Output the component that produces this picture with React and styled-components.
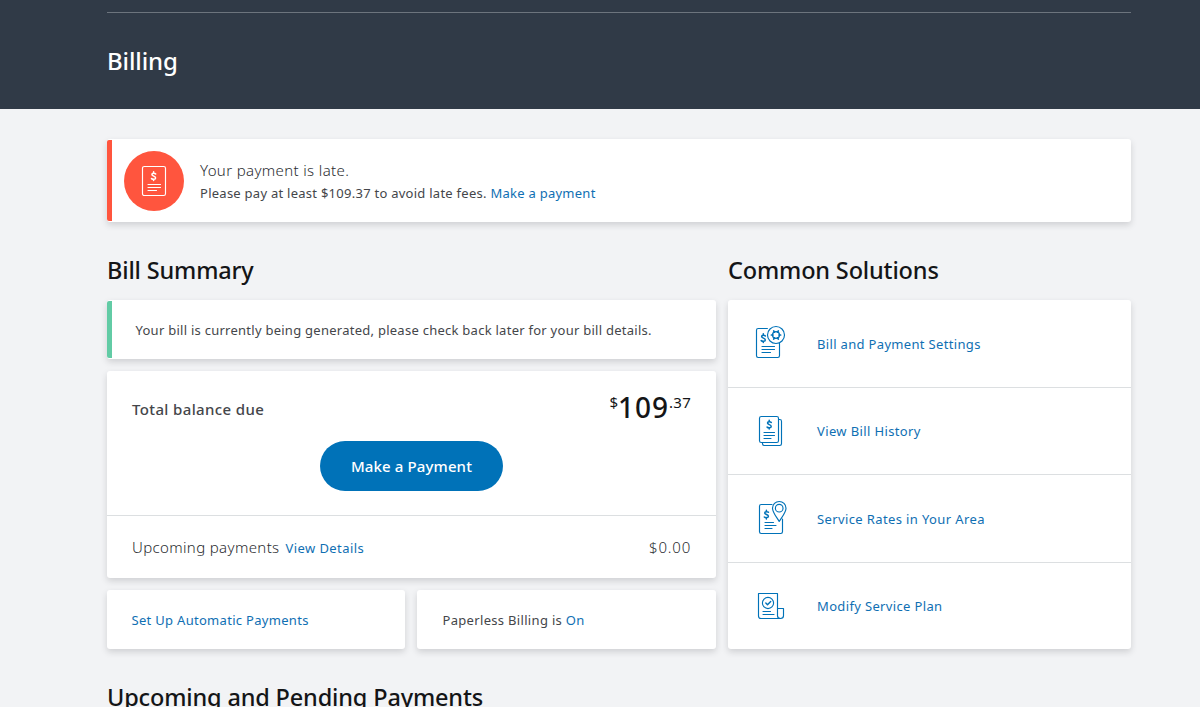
import React from "react";
import styled, { createGlobalStyle } from "styled-components";

const Global = createGlobalStyle`
  * { box-sizing: border-box; }
  body {
    margin: 0;
    height: 707px;
    overflow: hidden;
    background: #f2f3f5;
    color: #44464a;
    font-family: "Noto Sans", "Open Sans", sans-serif;
    font-size: 13px;
  }
`;

const Header = styled.header`
  height: 109px;
  padding: 12px 69px 0 107px;
  background: #303a47;
`;
const HeaderInner = styled.div`
  border-top: 1px solid #6c747d;
  padding-top: 31px;
`;
const PageTitle = styled.h1`
  margin: 0;
  color: #fff;
  font-size: 24px;
  line-height: 34px;
  font-weight: 500;
  letter-spacing: -0.1px;
`;
const Main = styled.main`
  padding: 30px 69px 0 107px;
`;
const Card = styled.section`
  background: #fff;
  border-radius: 3px;
  box-shadow: 0 3px 6px rgba(40, 44, 50, 0.17);
`;
const Notice = styled(Card)`
  display: flex;
  align-items: center;
  height: ${(p) => p.$height}px;
  position: relative;
  padding-left: ${(p) => p.$inset}px;
  &::before {
    content: "";
    position: absolute;
    left: 0;
    top: 1px;
    bottom: 1px;
    width: 5px;
    border-radius: 2px 0 0 2px;
    background: ${(p) => p.$accent};
  }
`;
const Badge = styled.div`
  display: flex;
  align-items: center;
  justify-content: center;
  width: 60px;
  height: 60px;
  margin-right: 16px;
  border-radius: 50%;
  background: #ff553e;
  color: #fff;
`;
const NoticeText = styled.div`
  display: flex;
  flex-direction: column;
  padding-top: 2px;
`;
const Text = styled.span`
  font-size: ${(p) => p.$size || 13}px;
  line-height: ${(p) => p.$line || 22}px;
  font-weight: ${(p) => p.$weight || 400};
  letter-spacing: ${(p) => (p.$track === undefined ? 0.26 : p.$track)}px;
  white-space: nowrap;
`;
const LightText = styled(Text)`
  color: #2a2c30;
  font-size: 15px;
  line-height: 23px;
  font-weight: 300;
`;
const Link = styled.a`
  color: #0f6fb3;
  text-decoration: none;
  font-size: 13px;
  line-height: 22px;
  letter-spacing: ${(p) => (p.$track === undefined ? 0.26 : p.$track)}px;
  white-space: nowrap;
`;
const Columns = styled.div`
  display: grid;
  grid-template-columns: 609px 403px;
  column-gap: 12px;
`;
const Heading = styled.h2`
  margin: 0;
  padding-top: 31px;
  height: 78px;
  color: #141517;
  font-size: 23.5px;
  line-height: 34px;
  font-weight: 500;
  letter-spacing: -0.16px;
  white-space: nowrap;
`;
const Stack = styled.div`
  display: flex;
  flex-direction: column;
  gap: 12px;
`;
const BalanceTop = styled.div`
  height: 145px;
  padding: 20px 25px 0;
  border-bottom: 1px solid #dcdfe1;
`;
const Line = styled.div`
  display: flex;
  justify-content: space-between;
`;
const Amount = styled.div`
  display: flex;
  align-items: flex-start;
  height: 50px;
  color: #141517;
`;
const Dollars = styled.span`
  font-size: 28px;
  line-height: 33px;
  font-weight: 500;
  letter-spacing: 1px;
`;
const Small = styled.span`
  font-size: 15px;
  line-height: 23px;
  letter-spacing: ${(p) => p.$track || 0}px;
`;
const PayButton = styled.button`
  display: block;
  width: 183px;
  height: 50px;
  margin: 0 auto;
  border: 0;
  padding: 0;
  border-radius: 25px;
  background: #0072b8;
  color: #fff;
  font: 500 15px/50px "Noto Sans", "Open Sans", sans-serif;
  letter-spacing: 0.12px;
`;
const Upcoming = styled.div`
  display: flex;
  align-items: center;
  height: 62px;
  padding: 0 25px;
  gap: 6px;
`;
const ViewDetails = styled(Link)`
  padding-top: 2px;
`;
const Spacer = styled.span`
  flex: 1;
`;
const Pair = styled.div`
  display: grid;
  grid-template-columns: 298px 299px;
  gap: 12px;
`;
const Tile = styled(Card)`
  display: flex;
  align-items: center;
  height: 59px;
  padding: 1px 0 0 ${(p) => p.$inset || 24.5}px;
`;
const SolutionList = styled(Card)`
  display: grid;
  grid-template-rows: 88px 87px 88px 86px;
`;
const Solution = styled.div`
  display: flex;
  align-items: center;
  padding-left: 26px;
  border-bottom: 1px solid #dcdfe1;
  &:last-child { border-bottom: 0; }
`;
const IconBox = styled.span`
  display: flex;
  width: 63px;
  color: #0072b8;
`;

const Svg = ({ w = 34, h = 34, children }) => (
  <svg width={w} height={h} viewBox={`0 0 ${w} ${h}`} fill="none" stroke="currentColor" strokeWidth="1.15" strokeLinecap="round" strokeLinejoin="round">
    {children}
  </svg>
);
const DollarMark = ({ x, y }) => (
  <path
    transform={`translate(${x} ${y})`}
    strokeWidth="1.5"
    d="M2.1 -2.3C1.4 -3.1 -1.7 -3.4 -1.7 -1.6C-1.7 .1 2 -.2 2 1.7C2 3.4 -1.1 3.3 -2.1 2.4M0 -4.4V-3M0 3V4.4"
  />
);
const LateIcon = () => (
  <Svg w={26} h={32}>
    <rect x="1.5" y="1.5" width="23" height="29" rx="1.8" />
    <DollarMark x={12.6} y={11.2} />
    <path d="M7 19.5h12.5M7 22.5h12.5M7 25.5h8.5" />
  </Svg>
);
const SettingsIcon = () => (
  <Svg h={37}>
    <path d="M13.4 3.5H4.2Q2.5 3.5 2.5 5.2V30.8Q2.5 32.5 4.2 32.5H23.8Q25.5 32.5 25.5 30.8V18.4" />
    <circle cx="22" cy="10" r="8.5" />
    <path strokeWidth="1.7" d="M20.5 7.2L19.7 5.9M23.5 7.2L24.3 5.9M20.5 12.8L19.7 14.1M23.5 12.8L24.3 14.1M18.8 10H17.4M25.2 10H26.6" />
    <circle cx="22" cy="10" r="3.4" strokeWidth="1.4" />
    <DollarMark x={9.3} y={13.2} />
    <path d="M8 21.5h12.5M8 24.5h12.5M8 27.5h8.5" />
  </Svg>
);
const HistoryIcon = () => (
  <Svg>
    <rect x="5.5" y="2.5" width="19" height="26" rx="1.8" />
    <path d="M8.5 28.5V29.8Q8.5 31.5 10.2 31.5H25.8Q27.5 31.5 27.5 29.8V7.2Q27.5 5.5 25.8 5.5H24.5" />
    <DollarMark x={15.2} y={10.7} />
    <path d="M10 18.5h10.5M10 21.5h10.5M10 24.5h7" />
  </Svg>
);
const RatesIcon = () => (
  <Svg h={37}>
    <path d="M18 4.5H7.2Q5.5 4.5 5.5 6.2V31.8Q5.5 33.5 7.2 33.5H26.8Q28.5 33.5 28.5 31.8V19" />
    <path d="M25.2 21.5C22.8 17.3 18.5 12.5 18.5 8.2A6.7 6.7 0 0 1 32 8.2C32 12.5 27.7 17.3 25.2 21.5Z" />
    <circle cx="25.2" cy="8.2" r="3.8" />
    <DollarMark x={12.4} y={14.6} />
    <path d="M11 22.5h8.5M11 25.5h11M11 28.5h7" />
  </Svg>
);
const PlanIcon = () => (
  <Svg>
    <path d="M23.5 26.8V4.5H4.5V27Q4.5 29.5 7 29.5H26.5M23.5 19.5H29.5V26.8Q29.5 29.5 26.5 29.5Q23.5 29.5 23.5 26.8" />
    <circle cx="14" cy="14" r="5.6" />
    <path strokeWidth="1.4" d="M11.8 14.1L13.5 15.8L16.7 12.4" />
    <path d="M9 22.5h7.5M9 25.5h11" />
  </Svg>
);

const solutions = [
  { label: "Bill and Payment Settings", Icon: SettingsIcon, track: 0.33 },
  { label: "View Bill History", Icon: HistoryIcon, track: 0.37 },
  { label: "Service Rates in Your Area", Icon: RatesIcon, track: 0.38 },
  { label: "Modify Service Plan", Icon: PlanIcon, track: 0.35 },
];

export default function App() {
  return (
    <>
      <Global />
      <Header>
        <HeaderInner>
          <PageTitle>Billing</PageTitle>
        </HeaderInner>
      </Header>
      <Main>
        <Notice $height={83} $inset={17} $accent="#ff553e">
          <Badge><LateIcon /></Badge>
          <NoticeText>
            <LightText $track={0.36}>Your payment is late.</LightText>
            <Text>
              Please pay at least $109.37 to avoid late fees. <Link>Make a payment</Link>
            </Text>
          </NoticeText>
        </Notice>
        <Columns>
          <div>
            <Heading>Bill Summary</Heading>
            <Stack>
              <Notice $height={59} $inset={28.5} $accent="#62cba5">
                <Text>Your bill is currently being generated, please check back later for your bill details.</Text>
              </Notice>
              <Card>
                <BalanceTop>
                  <Line>
                    <Text $size={15} $weight={500} $line={36} $track={0.37}>Total balance due</Text>
                    <Amount>
                      <Small>$</Small>
                      <Dollars>109</Dollars>
                      <Small $track={0.25}>.37</Small>
                    </Amount>
                  </Line>
                  <PayButton>Make a Payment</PayButton>
                </BalanceTop>
                <Upcoming>
                  <LightText $track={0.36}>Upcoming payments</LightText>
                  <ViewDetails $track={0.42}>View Details</ViewDetails>
                  <Spacer />
                  <LightText $track={0.8}>$0.00</LightText>
                </Upcoming>
              </Card>
              <Pair>
                <Tile><Link $track={0.3}>Set Up Automatic Payments</Link></Tile>
                <Tile $inset={25.5}><Text $track={0.32}>Paperless Billing is <Link $track={0.32}>On</Link></Text></Tile>
              </Pair>
            </Stack>
          </div>
          <div>
            <Heading>Common Solutions</Heading>
            <SolutionList>
              {solutions.map(({ label, Icon, track }) => (
                <Solution key={label}>
                  <IconBox><Icon /></IconBox>
                  <Link $track={track}>{label}</Link>
                </Solution>
              ))}
            </SolutionList>
          </div>
        </Columns>
        <Heading>Upcoming and Pending Payments</Heading>
      </Main>
    </>
  );
}
